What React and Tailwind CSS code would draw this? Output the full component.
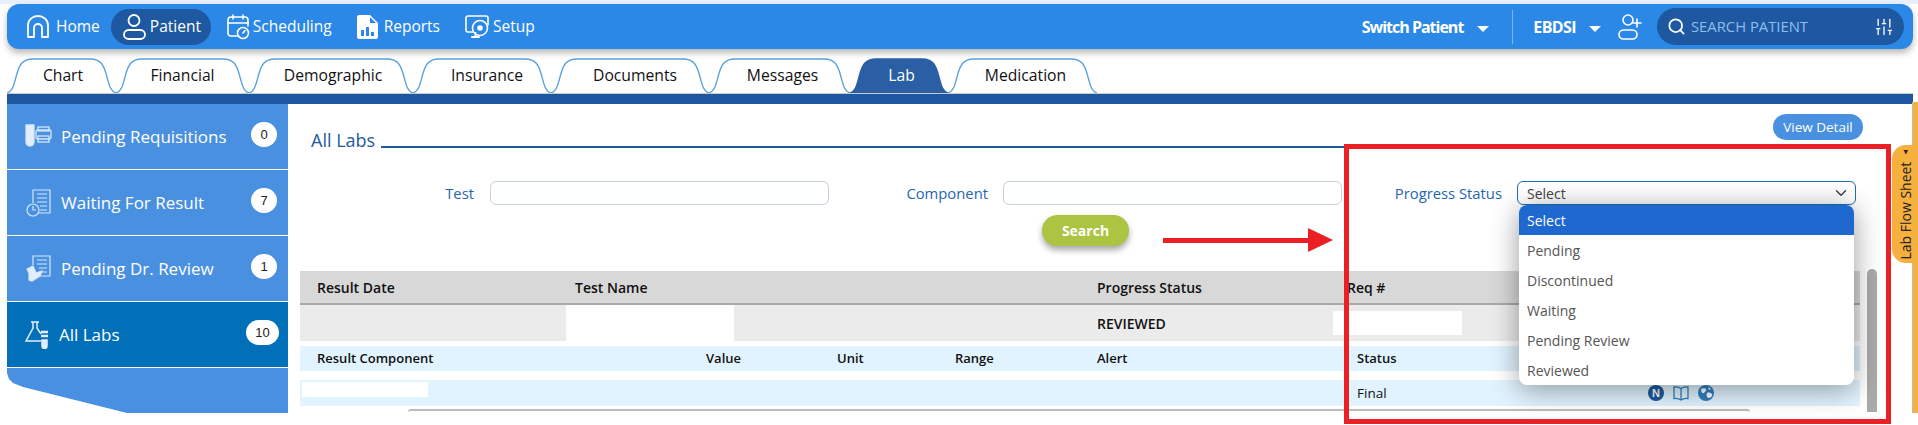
import React from "react";
import { ChevronDown, Search, SlidersVertical } from "lucide-react";

const S = { fill: "none", stroke: "currentColor", strokeWidth: 1.6, strokeLinecap: "round", strokeLinejoin: "round" };

const HomeIcon = () => (
  <svg width="24" height="26" viewBox="0 0 24 26" {...S} strokeWidth="1.8"><path d="M2 23V11.5C2 6 6.5 2 12 2s10 4 10 9.5V23h-6V14c0-2.2-1.8-4-4-4s-4 1.8-4 4v9z" /></svg>
);
const PersonIcon = () => (
  <svg width="24" height="28" viewBox="0 0 24 28" {...S} strokeWidth="1.8"><circle cx="12" cy="7.5" r="5.5" /><rect x="2" y="17" width="21" height="9" rx="4.5" /></svg>
);
const CalIcon = () => (
  <svg width="24" height="26" viewBox="0 0 24 26" {...S}><path d="M12 22H5a3 3 0 0 1-3-3V6a3 3 0 0 1 3-3h14a3 3 0 0 1 3 3v6" /><path d="M2 9h20M7 1v4M17 1v4" /><circle cx="17" cy="19" r="5.5" /><path d="M17 19l2-2.5" /></svg>
);
const ReportIcon = () => (
  <svg width="23" height="26" viewBox="0 0 23 26"><path fill="currentColor" fillRule="evenodd" d="M3 1h11l8 8v14a2 2 0 0 1-2 2H3a2 2 0 0 1-2-2V3a2 2 0 0 1 2-2zm11 2v6h6zM5 16v6h3v-6zm5-3v9h3v-9zm5 5v4h3v-4z" /></svg>
);
const SetupIcon = () => (
  <svg width="26" height="26" viewBox="0 0 26 26" {...S}><path d="M9 18H4a2 2 0 0 1-2-2V4a2 2 0 0 1 2-2h18a2 2 0 0 1 2 2v7" /><circle cx="16" cy="14" r="7.5" /><circle cx="16" cy="14" r="2" fill="currentColor" /><path d="M8 23h7M11.5 19v4" strokeWidth="2" /></svg>
);
const AddUser = () => (
  <svg width="24" height="28" viewBox="0 0 24 28" {...S}><circle cx="10" cy="7" r="5" /><rect x="1" y="17" width="18" height="9" rx="4.5" /><path d="M19 6v8M15 10h8" /></svg>
);
const Caret = () => <span className="inline-block w-0 h-0 border-l-[6px] border-r-[6px] border-t-[6px] border-l-transparent border-r-transparent border-t-white" />;

const ReqIcon = () => (
  <svg width="27" height="26" viewBox="0 0 27 26" fill="none" stroke="#d6e6f9" strokeWidth="1.3"><path d="M1 1h8v17a4 4 0 0 1-8 0z" fill="#e4eefb" /><rect x="11" y="6" width="15" height="9" rx="1.5" /><rect x="13" y="3" width="11" height="4" /><rect x="13" y="12" width="11" height="6" /></svg>
);
const WaitIcon = () => (
  <svg width="25" height="28" viewBox="0 0 25 28" fill="none" stroke="#d6e6f9" strokeWidth="1.2"><path d="M7 14V1h17v23H13" /><path d="M11 5h10M11 9h10M11 13h10M14 17h7M14 21h7" /><circle cx="7" cy="21" r="6" /><path d="M7 17v4h3" /></svg>
);
const RevIcon = () => (
  <svg width="25" height="28" viewBox="0 0 25 28" fill="none" stroke="#d6e6f9" strokeWidth="1.2"><path d="M7 10V1h17v20H14" /><path d="M11 5h10M11 9h10M13 13h8M15 17h6" /><path d="M1 14l6-3 3 7 6-2-2 5-8 5-3-1v-7z" fill="#e4eefb" /></svg>
);
const LabsIcon = () => (
  <svg width="25" height="28" viewBox="0 0 25 28" fill="none" stroke="#e4eefb" strokeWidth="1.5"><path d="M6 1h8M8 1v6L1 20h15" /><path d="M12 1v6l4 6" /><path d="M16 11h7M16 15h7" strokeWidth="2.4" /><path d="M17 19h5v6a2.5 2.5 0 0 1-5 0z" fill="#e4eefb" /></svg>
);

const tabs = [
  ["Chart", "w-[109px]", 109, "pl-[3px]"],
  ["Financial", "w-[133px]", 133, "pl-0"],
  ["Demographic", "w-[164px]", 164, "pl-[4px]"],
  ["Insurance", "w-[138px]", 138, "pl-[10px]"],
  ["Documents", "w-[158px]", 158, "pl-[10px]"],
  ["Messages", "w-[141px]", 141, "pl-[6px]"],
  ["Lab", "w-[98px]", 98, "pl-[5px]"],
  ["Medication", "w-[149px]", 149, "pl-[6px]"],
];

function Tab({ label, w, cls, pad }) {
  const active = label === "Lab";
  const d = `M0 35C6 33 7 26 9 19C12 7 15 1 26 1H${w - 26}C${w - 15} 1 ${w - 12} 7 ${w - 9} 19C${w - 7} 26 ${w - 6} 33 ${w} 35`;
  return (
    <div className={`relative h-[35px] flex items-center justify-center ${cls} ${pad}`}>
      <svg className="absolute inset-0" width={w} height="35" viewBox={`0 0 ${w} 35`}>
        <path d={d} fill={active ? "#2a5fa5" : "#ffffff"} stroke={active ? "#2a5fa5" : "#5ba3d9"} strokeWidth="1.4" />
      </svg>
      <span className={`relative text-[15.7px] ${active ? "text-white" : "text-[#111]"}`}>{label}</span>
    </div>
  );
}

function SideItem({ icon, label, n, active, wide }) {
  return (
    <div className={`h-[65px] mb-px shrink-0 flex items-center ${active ? "bg-[#026fb9]" : "bg-[#4a90e0]"} ${wide ? "pl-[16px]" : "pl-[17px]"} ${wide ? "pr-[9px]" : "pr-[11px]"}`}>
      <span className="w-[28px] flex justify-center shrink-0">{icon}</span>
      <span className={`flex-1 text-[17px] text-white ${wide ? "ml-[8px]" : "ml-[9px]"}`}>{label}</span>
      <span className={`h-[25px] ${wide ? "w-[33px]" : "w-[26px]"} -mt-[4px] rounded-full bg-white flex items-center justify-center text-[13px] text-[#222] font-['Liberation_Sans',sans-serif]`}>{n}</span>
    </div>
  );
}

const options = ["Select", "Pending", "Discontinued", "Waiting", "Pending Review", "Reviewed"];

export default function App() {
  return (
    <div className="relative w-[1918px] h-[425px] overflow-hidden bg-white flex flex-col font-['Open_Sans',sans-serif]">
      <div className="h-[4px] bg-[#e8effc] shrink-0" />
      <header className="h-[45px] ml-[7px] mr-[5px] shrink-0 rounded-[12px] bg-[#2b88e6] shadow-[0_4px_6px_rgba(0,0,0,0.28)] flex items-center text-white text-[15.5px] relative z-10">
        <div className="flex items-center ml-[19px] gap-[6px]"><HomeIcon /><span>Home</span></div>
        <div className="flex items-center ml-[11px] h-[36px] w-[100px] pl-[11px] gap-[4px] rounded-full bg-[#1e58a0]"><PersonIcon /><span>Patient</span></div>
        <div className="flex items-center ml-[15px] gap-[3px]"><CalIcon /><span>Scheduling</span></div>
        <div className="flex items-center ml-[24px] gap-[5px]"><ReportIcon /><span>Reports</span></div>
        <div className="flex items-center ml-[24px] gap-[3px]"><SetupIcon /><span>Setup</span></div>
        <div className="flex-1" />
        <span className="font-bold text-[16px] tracking-[-1px]">Switch Patient</span>
        <span className="ml-[14px]"><Caret /></span>
        <span className="ml-[23px] w-px h-[34px] bg-[#7fb5ec]" />
        <span className="ml-[20px] font-bold text-[16px] tracking-[-0.6px]">EBDSI</span>
        <span className="ml-[13px]"><Caret /></span>
        <span className="ml-[17px]"><AddUser /></span>
        <div className="ml-[15px] mr-[9px] w-[247px] h-[37px] rounded-full bg-[#1e58a0] flex items-center pl-[10px] pr-[10px]">
          <Search size={19} strokeWidth={2.2} />
          <span className="ml-[5px] text-[14.8px] text-[#8fbdf0] flex-1">SEARCH PATIENT</span>
          <SlidersVertical size={20} strokeWidth={1.6} />
        </div>
      </header>

      <div className="h-[10px] shrink-0" />
      <nav className="h-[35px] ml-[7px] mr-[5px] shrink-0 flex items-end border-b border-[#c9c9c9]">
        {tabs.map(([l, c, w, p]) => <Tab key={l} label={l} cls={c} w={w} pad={p} />)}
      </nav>
      <div className="h-[10px] ml-[7px] mr-[5px] shrink-0 bg-[#1e56a0]" />

      <main className="flex ml-[7px] mr-[5px] h-[309px] shrink-0">
        <aside className="w-[281px] shrink-0 flex flex-col">
          <SideItem icon={<ReqIcon />} label="Pending Requisitions" n="0" />
          <SideItem icon={<WaitIcon />} label="Waiting For Result" n="7" />
          <SideItem icon={<RevIcon />} label="Pending Dr. Review" n="1" />
          <SideItem icon={<LabsIcon />} label="All Labs" n="10" active wide />
          <div className="flex-1 bg-[#4a90e0] [clip-path:polygon(0_0,100%_0,100%_100%,120px_100%,16px_19px,6px_15px,2px_11px,0_5px)]" />
        </aside>

        <section className="flex-1 min-w-0 pl-[12px] relative">
          <div className="h-[78px] relative">
            <div className="flex items-end w-full pl-[11px] pt-[26px] pr-[53px]">
              <span className="text-[18px] leading-[26px] text-[#1e5a9e] mt-[-3px]">All Labs</span>
              <span className="flex-1 ml-[6px] mb-[5px] h-[2px] bg-[#1e5a9e]" />
            </div>
            <button className="absolute right-[50px] top-[10px] w-[90px] h-[26px] rounded-full bg-[#4a90e0] text-white text-[13.5px]">View Detail</button>
          </div>
          <div className="h-[24px] mt-[-1px] flex items-center text-[14.8px] text-[#1f66b0]">
            <span className="w-[174px] text-right">Test</span>
            <span className="ml-[16px] w-[339px] h-[24px] rounded-[6px] border border-[#c5cfe0] bg-white" />
            <span className="w-[159px] text-right">Component</span>
            <span className="ml-[15px] w-[339px] h-[24px] rounded-[6px] border border-[#c5cfe0] bg-white" />
            <span className="w-[160px] text-right">Progress Status</span>
            <span className="ml-[15px] w-[339px] h-[24px] rounded-[6px] border border-[#1e6fb0] bg-white flex items-center justify-between pl-[9px] pr-[5px] text-[14px] text-[#444]">
              Select <ChevronDown size={18} strokeWidth={2} className="text-[#444]" />
            </span>
          </div>
          <div className="mt-[10px] pl-[742px]">
            <button className="w-[87px] h-[31px] rounded-full bg-[#abc441] text-white text-[14px] font-bold shadow-[0_4px_6px_rgba(0,0,0,0.35)]">Search</button>
          </div>

          <div className="mt-[25px] flex">
            <div className="w-[1560px] shrink-0 text-[14px] text-[#111]">
              <div className="h-[34px] grid grid-cols-[266px_522px_250px_1fr] items-center bg-[#d8d8d8] border-b-2 border-[#a9a9a9] font-semibold">
                <span className="pl-[17px]">Result Date</span>
                <span className="pl-[9px]">Test Name</span>
                <span className="pl-[9px]">Progress Status</span>
                <span className="pl-[9px]">Req #</span>
              </div>
              <div className="h-[36px] grid grid-cols-[266px_168px_354px_250px_1fr] items-center bg-[#ebebeb] font-semibold">
                <span />
                <span className="h-full bg-white" />
                <span />
                <span className="pl-[9px]">REVIEWED</span>
                <span className="ml-[-5px] w-[129px] h-[24px] bg-white" />
              </div>
              <div className="h-[25px] mt-[5px] pl-[17px] grid grid-cols-[389px_131px_118px_142px_260px_1fr] items-center bg-[#e1f3fe] text-[13px] font-semibold">
                <span>Result Component</span><span>Value</span><span>Unit</span><span>Range</span><span>Alert</span><span>Status</span>
              </div>
              <div className="h-[26px] mt-[9px] flex items-center bg-[#e1f3fe] text-[13.5px] relative">
                <span className="ml-[2px] w-[126px] h-[15px] bg-white -mt-[8px]" />
                <span className="ml-[929px] w-[291px]">Final</span>
                <svg width="16" height="16" viewBox="0 0 16 16"><circle cx="8" cy="8" r="8" fill="#1e5a9e" /><text x="8" y="12" textAnchor="middle" fontSize="11" fontWeight="700" fill="#fff" fontFamily="Liberation Sans">N</text></svg>
                <svg className="ml-[9px]" width="16" height="16" viewBox="0 0 16 16" fill="none" stroke="#2f80c2" strokeWidth="1.3"><path d="M8 3.5C6 2 3.5 1.5 1 2v11.5c2.5-.5 5 0 7 1.500c2-1.500 4.500-2 7-1.500V2c-2.500-.5-5 0-7 1.500zM8 3.500V15" /></svg>
                <svg className="ml-[9px]" width="16" height="16" viewBox="0 0 16 16"><circle cx="8" cy="8" r="8" fill="#2f80c2" /><path d="M3 4c2-1 4-1 5 0s-1 3-2 4-3 0-3-4zM9 8c2-1 4 0 5 1s-1 4-3 4-3-3-2-5zM10 2l3 2-2 1z" fill="#fff" /></svg>
              </div>
              <div className="ml-[108px] mr-[110px] mt-[3px] h-[3px] rounded-t-[6px] border-t-2 border-[#bbbbbb]" />
            </div>
            <div className="ml-[7px] mt-[-2px] w-[10px] h-[143px] rounded-t-full bg-[#aaaaaa]" />
          </div>
        </section>
      </main>

      {/* right orange strip and Lab Flow Sheet handle */}
      <div className="absolute right-0 top-[102px] w-[6px] h-[311px] bg-[#f5b03e] border-l border-[#bbbbbb] z-10" />
      <div className="absolute right-0 top-[145px] w-[26px] h-[118px] rounded-tl-[14px] rounded-bl-[14px] bg-[#f5b03e] z-10 flex items-center justify-center">
        <span className="[writing-mode:vertical-rl] rotate-180 text-[14px] text-[#222] whitespace-nowrap">Lab Flow Sheet <span className="text-[9px]">▴</span></span>
      </div>

      {/* arrow */}
      <div className="absolute left-[1163px] top-[228px] flex items-center z-20">
        <span className="w-[145px] h-[5px] bg-[#ea2024]" />
        <span className="w-0 h-0 border-t-[12px] border-b-[12px] border-l-[25px] border-t-transparent border-b-transparent border-l-[#ea2024]" />
      </div>

      {/* dropdown menu */}
      <div className="absolute left-[1519px] top-[205px] w-[335px] rounded-[8px] bg-white overflow-hidden shadow-[0_4px_28px_rgba(0,0,0,0.4)] z-20 text-[14px] text-[#555]">
        {options.map((o, i) => (
          <div key={o} className={`h-[30px] flex items-center pl-[8px] ${i === 0 ? "bg-[#1e68d0] text-white" : ""}`}>{o}</div>
        ))}
      </div>

      {/* annotation frame */}
      <div className="absolute left-[1344px] top-[144px] w-[547px] h-[280px] border-[5px] border-[#ea2024] z-30 pointer-events-none" />
    </div>
  );
}
